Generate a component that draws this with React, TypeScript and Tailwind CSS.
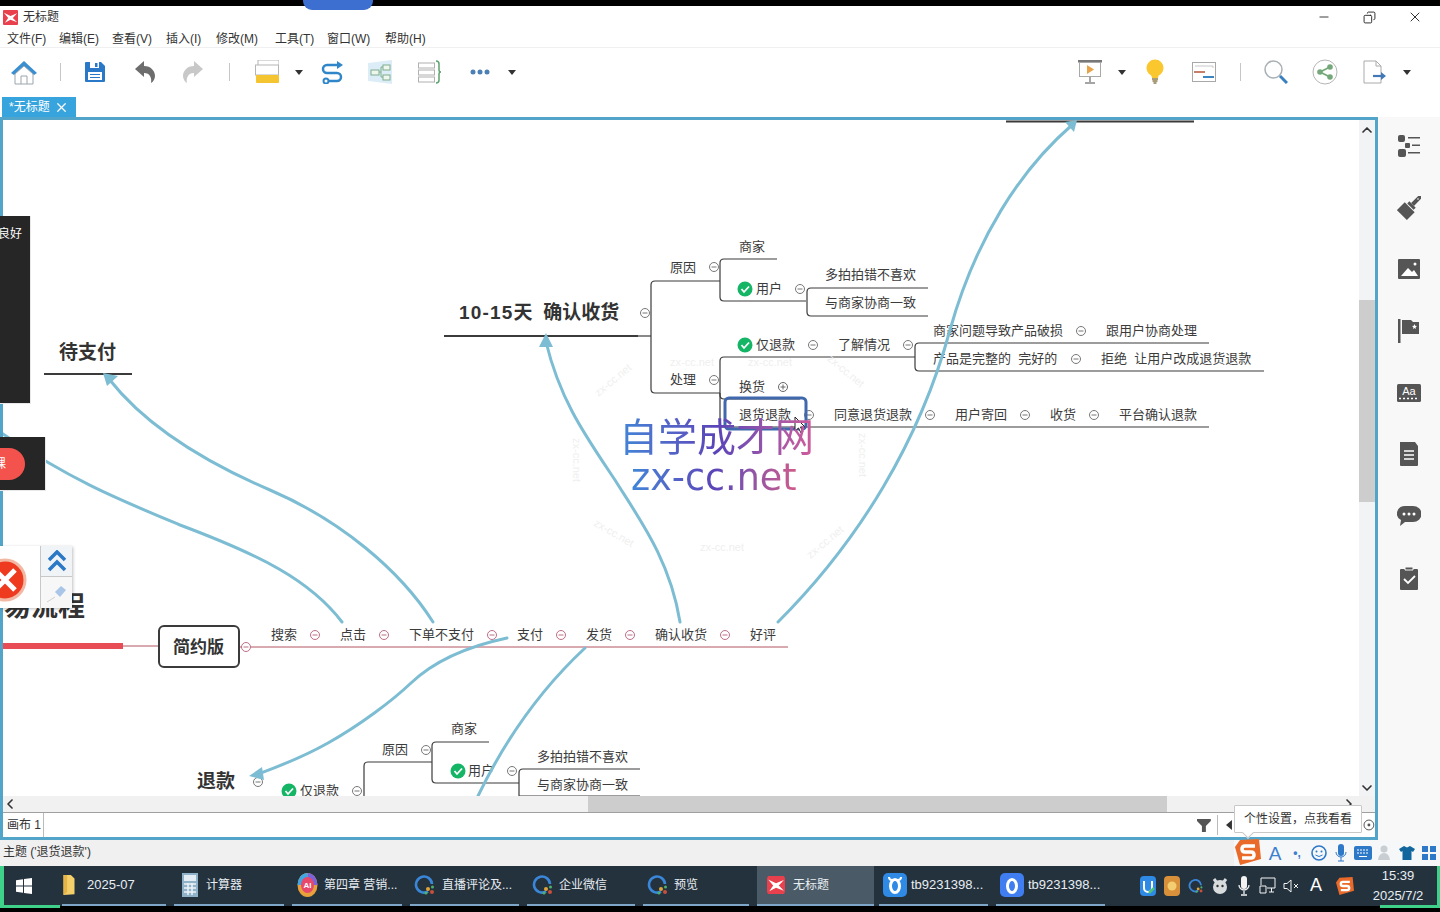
import type { ReactNode } from "react";
import { ChevronLeft, ChevronRight, ChevronUp, Minus, Copy, X } from "lucide-react";

// canvas labels, page coordinates (left edge, vertical centre)
const labels: [string, number, number][] = [
  ["商家", 739, 247],
  ["原因", 670, 268],
  ["多拍拍错不喜欢", 825, 275],
  ["用户", 756, 289],
  ["与商家协商一致", 825, 303],
  ["商家问题导致产品破损", 933, 331],
  ["跟用户协商处理", 1106, 331],
  ["仅退款", 756, 345],
  ["了解情况", 838, 345],
  ["产品是完整的  完好的", 933, 359],
  ["拒绝  让用户改成退货退款", 1101, 359],
  ["处理", 670, 380],
  ["换货", 739, 387],
  ["退货退款", 739, 415],
  ["同意退货退款", 834, 415],
  ["用户寄回", 955, 415],
  ["收货", 1050, 415],
  ["平台确认退款", 1119, 415],
  ["搜索", 271, 635],
  ["点击", 340, 635],
  ["下单不支付", 409, 635],
  ["支付", 517, 635],
  ["发货", 586, 635],
  ["确认收货", 655, 635],
  ["好评", 750, 635],
  ["商家", 451, 729],
  ["原因", 382, 750],
  ["多拍拍错不喜欢", 537, 757],
  ["用户", 468, 771],
  ["与商家协商一致", 537, 785],
  ["仅退款", 300, 791],
];

const grayDots: [number, number][] = [
  [714, 267], [800, 289], [645, 313], [813, 345], [908, 345], [1081, 331], [1076, 359],
  [714, 380], [809, 415], [930, 415], [1025, 415], [1094, 415], [426, 750], [512, 771],
  [258, 782], [357, 791],
];
const pinkDots: [number, number][] = [
  [246, 647], [315, 635], [384, 635], [492, 635], [561, 635], [630, 635], [725, 635],
];
const checks: [number, number][] = [[745, 289], [745, 345], [458, 771], [289, 791]];

// faint repeated watermark: x, y, rotation
const faint: [number, number, number][] = [
  [613, 380, -40], [692, 362, 0], [770, 362, 0], [846, 371, 40], [577, 460, 90],
  [863, 455, 90], [614, 533, 30], [722, 547, 0], [825, 542, -40],
];

const menus = [
  { t: "文件(F)", w: "w-[52px]" },
  { t: "编辑(E)", w: "w-[53px]" },
  { t: "查看(V)", w: "w-[54px]" },
  { t: "插入(I)", w: "w-[50px]" },
  { t: "修改(M)", w: "w-[59px]" },
  { t: "工具(T)", w: "w-[52px]" },
  { t: "窗口(W)", w: "w-[58px]" },
  { t: "帮助(H)", w: "w-[52px]" },
];

const tasks = [
  { name: "2025-07", w: "w-[104px] pl-0 gap-[11px] text-[13px]", icon: <FolderIcon /> },
  { name: "计算器", w: "w-[110px] pl-[7px] gap-[7px]", icon: <CalcIcon /> },
  { name: "第四章 营销...", w: "w-[110px] pl-[5px] gap-[6px]", icon: <AiIcon /> },
  { name: "直播评论及...", w: "w-[109px] pl-[4px] gap-[6px]", icon: <QIcon /> },
  { name: "企业微信", w: "w-[108px] pl-[5px] gap-[5px]", icon: <QIcon /> },
  { name: "预览", w: "w-[106px] pl-[4px] gap-[5px]", icon: <QIcon /> },
  { name: "无标题", w: "w-[117px] -mr-[3px] pl-[10px] gap-[8px] bg-[#4a5a66]", icon: <XmindIcon className="h-5 w-[18px] rounded-sm" /> },
  { name: "tb9231398...", w: "w-[109px] pl-[4px] gap-[4px] text-[13px]", icon: <TbIcon bg="#2f8ae6" horns /> },
  { name: "tb9231398...", w: "w-[109px] pl-[4px] gap-[4px] text-[13px]", icon: <TbIcon bg="#3f7df0" /> },
];

function XmindIcon({ className }: { className: string }) {
  return (
    <svg viewBox="0 0 16 16" className={className}>
      <rect width="16" height="16" rx="1" fill="#e8404c" />
      <path d="M1 3 L8 6.500 L15 3.500 L10.500 8.500 L15 13 L8 10.500 L2 13.500 L5.500 8.500 Z" fill="#fff" />
    </svg>
  );
}

function FolderIcon() {
  return (
    <svg viewBox="0 0 14 24" className="h-[22px] w-[14px] shrink-0">
      <path d="M1 1 H9 L13 5 V22 L1 23 Z" fill="#f5cf6a" />
      <path d="M1 1 H5 V20 L1 23 Z" fill="#e5b548" />
    </svg>
  );
}

function CalcIcon() {
  return (
    <svg viewBox="0 0 16 24" className="h-6 w-[18px] shrink-0">
      <rect width="16" height="24" fill="#8fb2c8" />
      <rect x="2" y="2" width="12" height="6" fill="#e3edf3" />
      <path d="M2 11 H14 M2 15 H14 M2 19 H14 M6 10 V22 M10 10 V22" stroke="#eef4f8" strokeWidth="1.500" />
    </svg>
  );
}

function AiIcon() {
  return (
    <svg viewBox="0 0 20 24" className="h-6 w-[21px] shrink-0">
      <ellipse cx="10" cy="12" rx="10" ry="12" fill="#e9a23b" />
      <path d="M10 0 A10 12 0 0 1 20 12 L10 12 Z" fill="#7a62d8" />
      <path d="M0 12 A10 12 0 0 1 10 0 L10 12 Z" fill="#3ea7e6" />
      <ellipse cx="10" cy="12" rx="6.500" ry="8" fill="#e8486a" />
      <text x="10" y="15" textAnchor="middle" fontSize="8" fontWeight="700" fill="#fff">AI</text>
    </svg>
  );
}

function QIcon() {
  return (
    <svg viewBox="0 0 22 22" className="h-[22px] w-[22px] shrink-0">
      <path d="M14 17.500 A8 8 0 1 1 18 10" fill="none" stroke="#3a86d8" strokeWidth="2.600" />
      <circle cx="14" cy="15" r="2" fill="#e0a43a" />
      <circle cx="18" cy="18" r="2" fill="#c9503c" />
      <circle cx="18.500" cy="13" r="1.500" fill="#4cb26a" />
      <circle cx="12" cy="19" r="1.500" fill="#4cb26a" />
    </svg>
  );
}

function TbIcon({ bg, horns }: { bg: string; horns?: boolean }) {
  return (
    <svg viewBox="0 0 24 24" className="h-6 w-6 shrink-0">
      <rect width="24" height="24" rx="5" fill={bg} />
      {horns ? <path d="M6 4 Q6 7 9 7 H15 Q18 7 18 4" fill="none" stroke="#fff" strokeWidth="2" /> : null}
      <ellipse cx="12" cy="13" rx="4.500" ry="6.500" fill="none" stroke="#fff" strokeWidth="3" />
    </svg>
  );
}

function Caret() {
  return (
    <svg viewBox="0 0 8 5" className="h-[5px] w-2">
      <path d="M0 0 H8 L4 5 Z" fill="#333" />
    </svg>
  );
}

function Sep({ className }: { className: string }) {
  return <div className={`h-[18px] w-px bg-[#c6c6c6] ${className}`} />;
}

function LeftTools() {
  return (
    <div className="flex items-center pl-[10px]">
      <svg viewBox="0 0 28 26" className="h-[26px] w-7">
        <path d="M14 2 L1 14 L4 16 L14 7 L24 16 L27 14 Z" fill="#3a8fd0" />
        <path d="M5 15 V25 H23 V15 L14 7 Z" fill="#fff" stroke="#9aa5ad" />
        <path d="M11 25 V17 H17 V25" fill="none" stroke="#9aa5ad" />
      </svg>
      <Sep className="ml-[22px]" />
      <svg viewBox="0 0 20 20" className="ml-[24px] h-5 w-5">
        <path d="M0 1 Q0 0 1 0 H16 L20 4 V19 Q20 20 19 20 H1 Q0 20 0 19 Z" fill="#2a79c8" />
        <rect x="5" y="0" width="9" height="6" fill="#fff" />
        <rect x="10" y="1" width="2.500" height="4" fill="#2a79c8" />
        <rect x="3" y="10" width="14" height="8" fill="#fff" />
        <path d="M5 12.500 H15 M5 15.500 H15" stroke="#2a79c8" />
      </svg>
      <svg viewBox="0 0 20 22" className="ml-[30px] h-[22px] w-5">
        <path d="M0 8 L9 0 V5 C16 5 20 10 20 15 C20 18 18 21 16 22 C17 17 15 12 9 12 V16 Z" fill="#6d6d6d" />
      </svg>
      <svg viewBox="0 0 20 22" className="ml-[28px] h-[22px] w-5">
        <path d="M20 8 L11 0 V5 C4 5 0 10 0 15 C0 18 2 21 4 22 C3 17 5 12 11 12 V16 Z" fill="#c8c8c8" />
      </svg>
      <Sep className="ml-[26px]" />
      <svg viewBox="0 0 24 24" className="ml-[25px] h-6 w-6">
        <rect x="3" y="0" width="21" height="9" fill="#fff" stroke="#b5b5b5" />
        <rect x="0.500" y="5" width="23" height="10" fill="#fff" stroke="#b5b5b5" />
        <rect x="1" y="15" width="23" height="8" rx="1" fill="#f5c431" />
      </svg>
      <div className="ml-[16px]"><Caret /></div>
      <svg viewBox="0 0 24 24" className="ml-[17px] h-6 w-6">
        <path d="M18 5 H7 A4 4 0 0 0 7 13 H17 A4 4 0 0 1 17 21 H8" fill="none" stroke="#2f86c8" strokeWidth="2.500" />
        <path d="M17 1 L23 5 L17 9 Z" fill="#2f86c8" />
        <circle cx="6" cy="21" r="2.500" fill="#fff" stroke="#2f86c8" strokeWidth="2" />
      </svg>
      <svg viewBox="0 0 26 24" className="ml-[23px] h-6 w-[26px]">
        <path d="M1 3 L25 0 V24 L1 21 Z" fill="#dcedf7" />
        <g fill="#eef6ee" stroke="#7fae90">
          <rect x="4" y="10" width="8" height="5" />
          <rect x="16" y="5" width="7" height="5" />
          <rect x="16" y="15" width="7" height="5" />
        </g>
        <path d="M12 12 H14 M14 7 V17 M14 7 H16 M14 17 H16" stroke="#7fae90" fill="none" />
      </svg>
      <svg viewBox="0 0 24 24" className="ml-[25px] h-6 w-6">
        <g fill="#fff" stroke="#b0b0b0">
          <rect x="0.500" y="3" width="16" height="5" />
          <rect x="0.500" y="10" width="16" height="5" />
          <rect x="0.500" y="17" width="16" height="5" />
        </g>
        <path d="M18 1 Q21 1 21 4 V10 Q21 12 23 12 Q21 12 21 14 V20 Q21 23 18 23" fill="none" stroke="#5fa36f" strokeWidth="1.500" />
      </svg>
      <svg viewBox="0 0 20 6" className="ml-[28px] h-[6px] w-5">
        <circle cx="3" cy="3" r="2.500" fill="#4b7fb5" />
        <circle cx="10" cy="3" r="2.500" fill="#4b7fb5" />
        <circle cx="17" cy="3" r="2.500" fill="#4b7fb5" />
      </svg>
      <div className="ml-[18px]"><Caret /></div>
    </div>
  );
}

function RightTools() {
  return (
    <div className="flex items-center pr-[29px]">
      <svg viewBox="0 0 24 24" className="h-6 w-6">
        <rect x="0" y="0" width="24" height="2.500" fill="#777" />
        <rect x="1.500" y="2.500" width="21" height="14" fill="#fff" stroke="#a8a8a8" />
        <path d="M9 5 L16 9.500 L9 14 Z" fill="#e8a24a" />
        <path d="M12 17 V22 M7 23 H17" stroke="#888" strokeWidth="1.500" />
      </svg>
      <div className="ml-[16px]"><Caret /></div>
      <svg viewBox="0 0 18 26" className="ml-[20px] h-[26px] w-[18px]">
        <circle cx="9" cy="9" r="8.500" fill="#fbc72e" />
        <path d="M5 15 H13 L12 19 H6 Z" fill="#fbc72e" />
        <path d="M6 20 H12 M6.500 22 H11.500 M7.500 24 H10.500" stroke="#8f7c4c" strokeWidth="1.500" />
      </svg>
      <svg viewBox="0 0 24 20" className="ml-[28px] h-5 w-6">
        <rect x="0.500" y="0.500" width="23" height="19" fill="#fff" stroke="#a8a8a8" />
        <path d="M2 10 H13" stroke="#c77f6a" strokeWidth="2" />
        <path d="M11 15 H22" stroke="#3a86c0" strokeWidth="2" />
        <path d="M3 4 H21 V6" fill="none" stroke="#c8c8c8" />
      </svg>
      <Sep className="ml-[24px]" />
      <svg viewBox="0 0 24 24" className="ml-[23px] h-6 w-6">
        <circle cx="9.500" cy="9.500" r="8.500" fill="#fff" stroke="#a9b0b5" strokeWidth="1.500" />
        <path d="M16 16 L23 23" stroke="#3a7fc0" strokeWidth="3" />
      </svg>
      <svg viewBox="0 0 26 26" className="ml-[24px] h-[26px] w-[26px]">
        <circle cx="13" cy="13" r="12" fill="#fff" stroke="#b5b5b5" />
        <path d="M18 8 L8 13 L18 18" fill="none" stroke="#74a878" strokeWidth="1.800" />
        <circle cx="18" cy="8" r="2.800" fill="#74a878" />
        <circle cx="8" cy="13" r="2.800" fill="#74a878" />
        <circle cx="18" cy="18" r="2.800" fill="#74a878" />
      </svg>
      <svg viewBox="0 0 24 24" className="ml-[25px] h-6 w-6">
        <path d="M1 1 H13 L18 6 V23 H1 Z M13 1 V6 H18" fill="#fff" stroke="#aaa" />
        <path d="M10 16 H19" stroke="#4278b8" strokeWidth="2.200" />
        <path d="M18 12 L23 16 L18 20 Z" fill="#4278b8" />
      </svg>
      <div className="ml-[16px]"><Caret /></div>
    </div>
  );
}

function SideIcons() {
  const box = "h-6 w-6";
  return (
    <div className="flex w-[62px] flex-col items-center gap-[37.700px] bg-[#f8f8f8] pt-[17px]">
      <svg viewBox="0 0 24 24" className={box}>
        <g fill="#555">
          <rect x="1" y="1" width="7" height="7" rx="2" />
          <rect x="8" y="9" width="5" height="5" rx="1" />
          <rect x="1" y="15" width="8" height="8" rx="2" />
          <rect x="11" y="3" width="12" height="1.500" />
          <rect x="15" y="10.500" width="8" height="1.500" />
          <rect x="11" y="18" width="12" height="1.500" />
        </g>
      </svg>
      <svg viewBox="0 0 24 24" className={box}>
        <g fill="#555" transform="rotate(45 12 12)">
          <path d="M10 -3 A2 2 0 0 1 14 -3 V7 H10 Z" />
          <rect x="7.500" y="7" width="9" height="3" />
          <path d="M5 11 H19 V22 H5 Z" />
        </g>
        <circle cx="21" cy="3" r="0.800" fill="#f8f8f8" />
      </svg>
      <svg viewBox="0 0 24 24" className={box}>
        <rect x="1" y="2" width="22" height="20" rx="1" fill="#555" />
        <path d="M4 19 L11 11 L15 15 L17 13 L21 19 Z" fill="#fff" />
        <circle cx="18" cy="7" r="1.500" fill="#fff" />
      </svg>
      <svg viewBox="0 0 24 24" className={box}>
        <rect x="1" y="0" width="2.500" height="24" fill="#555" />
        <path d="M5 1 H14 L16 3 H22 V15 H5 Z" fill="#555" />
        <path d="M17.500 5 L18.200 6.800 L20 7 L18.600 8.200 L19 10 L17.500 9 L16 10 L16.400 8.200 L15 7 L16.800 6.800 Z" fill="#fff" />
      </svg>
      <svg viewBox="0 0 24 18" className={box}>
        <rect width="24" height="18" rx="1.500" fill="#555" />
        <text x="12" y="10.500" textAnchor="middle" fontSize="11" fill="#fff" fontFamily="Liberation Sans">Aa</text>
        <path d="M2 14.500 H22" stroke="#fff" strokeWidth="1.500" strokeDasharray="2 2" />
      </svg>
      <svg viewBox="0 0 24 24" className={box}>
        <path d="M3 0 H18 L21 4 V23 Q21 24 20 24 H4 Q3 24 3 23 Z" fill="#555" />
        <path d="M7 9 H17 M7 13 H17 M7 17 H17" stroke="#fff" strokeWidth="1.300" />
      </svg>
      <svg viewBox="0 0 24 24" className={box}>
        <path d="M8 2 H16 A8 7.500 0 0 1 16 18 H8 L3 22 L4 16 A8 7.500 0 0 1 8 2 Z" fill="#555" />
        <circle cx="7" cy="10" r="1.500" fill="#fff" />
        <circle cx="12" cy="10" r="1.500" fill="#fff" />
        <circle cx="17" cy="10" r="1.500" fill="#fff" />
      </svg>
      <svg viewBox="0 0 24 24" className={box}>
        <path d="M4 3 H8 V1 H16 V3 H20 Q21 3 21 4 V23 Q21 24 20 24 H4 Q3 24 3 23 V4 Q3 3 4 3 Z" fill="#555" />
        <path d="M8 1 H16 V4 H8 Z" fill="none" stroke="#f8f8f8" />
        <path d="M7 13 L11 17 L18 10" fill="none" stroke="#fff" strokeWidth="1.800" />
      </svg>
    </div>
  );
}

function MapLines() {
  const ln = "#3b3b3b";
  return (
    <svg viewBox="3 120 1356 676" className="absolute inset-0 h-full w-full">
      <g fill="none" stroke={ln} strokeWidth="1.200">
        <path d="M444 336 H638" strokeWidth="2" />
        <path d="M638 336 H651" />
        <path d="M720 281 H655 Q651 281 651 285 V389 Q651 393 655 393 H720" />
        <path d="M777 259 H724 Q720 259 720 263 V297 Q720 301 724 301 H806" />
        <path d="M928 288 H811 Q807 288 807 292 V312 Q807 316 811 316 H928" />
        <path d="M915 357 H724 Q720 357 720 361 V395 Q720 399 724 399 H800" />
        <path d="M720 393 V427 H1209" />
        <path d="M1209 343 H919 Q915 343 915 347 V367 Q915 371 919 371 H1264" />
        <path d="M44 374 H132 M1006 121.500 H1194" strokeWidth="2" />
        <path d="M432 762 H368 Q364 762 364 766 V800" />
        <path d="M489 742 H436 Q432 742 432 746 V779 Q432 783 436 783 H519" />
        <path d="M640 769 H523 Q519 769 519 773 V800 M519 796 H640" />
      </g>
      <path d="M3 646 H123" stroke="#e84d55" strokeWidth="6" />
      <path d="M123 646 H159 M240 647 H788" stroke="#b2545f" strokeWidth="1" fill="none" />
      <rect x="159" y="626" width="80" height="41" rx="5" fill="#fff" stroke="#3b3b3b" strokeWidth="2" />
      {grayDots.map(([x, y]) => (
        <g key={`${x}-${y}`}>
          <circle cx={x} cy={y} r="4.500" fill="#fff" stroke="#777" />
          <path d={`M${x - 2.500} ${y} H${x + 2.500}`} stroke="#777" />
        </g>
      ))}
      {pinkDots.map(([x, y]) => (
        <g key={`${x}-${y}`}>
          <circle cx={x} cy={y} r="4.500" fill="#fff" stroke="#bd6e85" />
          <path d={`M${x - 2.500} ${y} H${x + 2.500}`} stroke="#bd6e85" />
        </g>
      ))}
      <circle cx="783" cy="387" r="4.500" fill="#fff" stroke="#666" />
      <path d="M780.500 387 H785.500 M783 384.500 V389.500" stroke="#666" />
      {checks.map(([x, y]) => (
        <g key={`${x}-${y}`}>
          <circle cx={x} cy={y} r="7.500" fill="#14b565" />
          <path d={`M${x - 3.500} ${y} L${x - 1} ${y + 3} L${x + 4} ${y - 2.500}`} fill="none" stroke="#fff" strokeWidth="1.800" />
        </g>
      ))}
    </svg>
  );
}

function Curves() {
  const c = "#7dbdd3";
  return (
    <svg viewBox="3 120 1356 676" className="absolute inset-0 h-full w-full">
      <g fill="none" stroke={c} strokeWidth="3" strokeLinecap="round">
        <path d="M778 622 C860 540 920 440 950 330 C975 240 1020 170 1072 125" />
        <path d="M680 622 C670 560 640 520 615 480 C585 435 560 400 546 342" />
        <path d="M433 622 C400 570 340 520 270 490 C200 460 145 425 109 379" />
        <path d="M342 622 C310 580 260 555 180 525 C120 500 70 480 0 432" />
        <path d="M507 638 C460 648 430 665 411 683 S360 725 328 743 S280 765 256 775" />
        <path d="M585 648 C540 690 505 740 478 796" />
      </g>
      <g fill={c}>
        <path d="M1077 120 L1065 122 L1074 132 Z" />
        <path d="M546 333 L539 347 L553 347 Z" />
        <path d="M103 373 L118 376 L107 386 Z" />
        <path d="M249 776 L262 767 L264 780 Z" />
      </g>
      {/* selected topic */}
      <rect x="725" y="398" width="81" height="31" rx="4" fill="none" stroke="#3f68ad" strokeWidth="3" />
      <path d="M795 417 V431 L798.500 428 L801 433 L803 432 L800.500 427 L805 427 Z" fill="#fff" stroke="#222" />
    </svg>
  );
}

function Canvas() {
  return (
    <div className="relative min-w-0 flex-1 overflow-hidden bg-white">
      <MapLines />
      {labels.map(([text, x, y]) => (
        <span
          key={`${text}-${x}-${y}`}
          className="absolute -translate-y-1/2 whitespace-pre text-[13px] leading-none text-[#3c3c3c]"
          style={{ left: x - 3, top: y - 121 }}
        >
          {text}
        </span>
      ))}
      <span className="absolute left-[456px] top-[181px] whitespace-pre text-[19px] font-bold leading-6 text-[#333]">
        <span className="tracking-[1.200px]">10-15</span>天  确认收货
      </span>
      <span className="absolute left-[56px] top-[220px] text-[19px] font-bold leading-[26px] text-[#333]">待支付</span>
      <span className="absolute left-[170px] top-[516px] text-[17px] font-bold leading-6 text-[#333]">简约版</span>
      <span className="absolute left-[194px] top-[649px] text-[19px] font-bold leading-[26px] text-[#333]">退款</span>
      <span className="absolute left-[-26px] top-[469px] text-[27px] font-bold leading-9 text-[#333]">交易流程</span>
      <Curves />
      {faint.map(([x, y, r]) => (
        <span
          key={`${x}-${y}`}
          className="absolute -translate-x-1/2 -translate-y-1/2 text-[11px] text-[#efefef]"
          style={{ left: x - 3, top: y - 120, rotate: `${r}deg` }}
        >
          zx-cc.net
        </span>
      ))}
      <span className="absolute left-[616px] top-[295px] bg-gradient-to-r from-[#3f86d8] via-[#5a44b8] to-[#d05a9a] bg-clip-text text-[39px] leading-[46px] text-transparent">
        自学成才网
      </span>
      <span className="absolute left-[628px] top-[336px] bg-gradient-to-r from-[#3f86d8] via-[#5a44b8] to-[#d05a8a] bg-clip-text font-['DejaVu_Sans'] text-[36.500px] leading-[44px] text-transparent">
        zx-cc.net
      </span>
    </div>
  );
}

function Tray({ children }: { children: ReactNode }) {
  return <div className="flex h-6 w-6 items-center justify-center">{children}</div>;
}

function Taskbar() {
  return (
    <div className="relative flex h-[40px] shrink-0 items-stretch bg-[#24323e] text-[12px] text-[#e8eef2]">
      <div className="flex w-[62px] items-center justify-center">
        <svg viewBox="0 0 16 16" className="mr-[14px] h-4 w-4">
          <path d="M0 2.300 L7 1.300 V7.500 H0 Z M8 1.100 L16 0 V7.500 H8 Z M0 8.500 H7 V14.700 L0 13.700 Z M8 8.500 H16 V16 L8 14.900 Z" fill="#fff" />
        </svg>
      </div>
      <div className="flex gap-2">
        {tasks.map((t, i) => (
          <div key={i} className={`flex items-center border-b-2 border-[#7ea6c8] ${t.w}`}>
            {t.icon}
            <span className="whitespace-nowrap">{t.name}</span>
          </div>
        ))}
      </div>
      <div className="ml-[31px] flex items-center pb-[1px]">
        <Tray><TbIconSmall /></Tray>
        <Tray>
          <svg viewBox="0 0 16 20" className="h-5 w-4">
            <rect width="16" height="20" rx="4" fill="#d8913a" />
            <circle cx="8" cy="10" r="4.500" fill="#f3cd70" />
          </svg>
        </Tray>
        <Tray><div className="origin-center scale-[0.72]"><QIcon /></div></Tray>
        <Tray>
          <svg viewBox="0 0 18 18" className="h-[18px] w-[18px]">
            <circle cx="9" cy="10" r="7" fill="#d9dcdd" />
            <path d="M3 2 L6 6 M15 2 L12 6" stroke="#d9dcdd" strokeWidth="3" />
            <circle cx="6.500" cy="9" r="1.200" fill="#333" />
            <circle cx="11.500" cy="9" r="1.200" fill="#333" />
          </svg>
        </Tray>
        <Tray>
          <svg viewBox="0 0 14 20" className="h-5 w-[14px]">
            <rect x="4" y="0" width="6" height="13" rx="3" fill="#f2f2f2" />
            <path d="M2 9 A5 5 0 0 0 12 9 M7 15 V18 M4 19 H10" fill="none" stroke="#f2f2f2" strokeWidth="1.300" />
          </svg>
        </Tray>
        <Tray>
          <svg viewBox="0 0 18 18" className="h-[18px] w-[18px]">
            <path d="M2 1 H16 V11 H8 M2 1 V8 M1 9 H7 V16 H1 Z M10 15 H15 M12.500 11 V15" fill="none" stroke="#f2f2f2" />
          </svg>
        </Tray>
        <Tray>
          <svg viewBox="0 0 18 16" className="h-4 w-[18px]">
            <path d="M1 5.500 H4 L8 2 V14 L4 10.500 H1 Z" fill="none" stroke="#f2f2f2" />
            <path d="M11 6 L15 10 M15 6 L11 10" stroke="#f2f2f2" />
          </svg>
        </Tray>
        <Tray><span className="font-['Liberation_Sans'] text-[18px] text-white">A</span></Tray>
        <div className="ml-[5px] flex h-6 w-6 items-center justify-center"><SogouMark small /></div>
      </div>
      <div className="ml-[11px] flex w-[60px] flex-col items-center justify-center pb-[1px] text-[13px] leading-[20px]">
        <span>15:39</span>
        <span>2025/7/2</span>
      </div>
    </div>
  );
}

function TbIconSmall() {
  return (
    <svg viewBox="0 0 16 20" className="h-5 w-4">
      <rect width="16" height="20" rx="4" fill="#2f8ae6" />
      <path d="M4 5 V12 A4 4 0 0 0 12 12 V5" fill="none" stroke="#fff" strokeWidth="2" />
      <path d="M9 17 L14 12" stroke="#4cc27a" strokeWidth="2.500" />
    </svg>
  );
}

function SogouMark({ small }: { small?: boolean }) {
  return (
    <svg viewBox="0 0 26 26" className={small ? "h-[22px] w-[18px]" : "h-[26px] w-[26px]"}>
      <path d="M5 1 L24 0 L26 20 L5 26 L0 8 Z" fill="#ea6a2a" />
      <path d="M20 7 H10 Q7 7 7 10 Q7 13 10 13 H16 Q19 13 19 16 Q19 19 16 19 H7" fill="none" stroke="#fff" strokeWidth="3.500" />
    </svg>
  );
}

function Overlays() {
  return (
    <>
      {/* top recording pill */}
      <div className="absolute left-[303px] top-0 h-[10px] w-[70px] rounded-b-[9px] bg-[#3d6fd0]" />

      {/* left side panels */}
      <div className="absolute left-0 top-[216px] flex h-[188px] w-[31px] justify-end border-r border-b border-[#e8e8e8] bg-[#262626] pt-[10px] pr-[8px]">
        <span className="whitespace-nowrap text-[12px] leading-4 text-white">良好</span>
      </div>
      <div className="absolute left-0 top-[437px] flex h-[54px] w-[46px] items-center border-r border-b border-[#e8e8e8] bg-[#262626]">
        <div className="flex h-8 w-[25px] items-center overflow-hidden rounded-r-full bg-[#f4524c] text-[12px] text-white">
          <span className="-ml-[6px]">课</span>
        </div>
      </div>

      {/* little popup with the red cross */}
      <div className="absolute left-0 top-[546px] flex h-[62px] w-[72px] bg-[#f7f7f7] shadow-[1px_1px_3px_rgba(0,0,0,0.25)]">
        <div className="relative w-[40px] overflow-hidden bg-white">
          <svg viewBox="0 0 44 44" className="absolute left-[-17px] top-[12px] h-11 w-11">
            <circle cx="22" cy="22" r="20" fill="#ee3a1f" stroke="#f3b8a4" strokeWidth="3" />
            <path d="M12 12 L32 32 M32 12 L12 32" stroke="#fff" strokeWidth="5" />
          </svg>
        </div>
        <div className="flex w-[32px] flex-col border-l border-[#c8c8c8]">
          <div className="flex h-[31px] items-center justify-center border-b border-[#c8c8c8] bg-[#f1f4f7]">
            <svg viewBox="0 0 20 22" className="h-[22px] w-5">
              <path d="M2 10 L10 2 L18 10 M2 20 L10 12 L18 20" fill="none" stroke="#2a78c6" strokeWidth="3.500" />
            </svg>
          </div>
          <div className="flex flex-1 items-center justify-center">
            <svg viewBox="0 0 20 20" className="h-5 w-5">
              <path d="M0 19 L8 14" stroke="#d0d0d0" />
              <path d="M8 9 L14 3 L19 7 L13 14 Z" fill="#a9c6e8" />
            </svg>
          </div>
        </div>
      </div>

      {/* input method tooltip */}
      <div className="absolute left-[1234px] top-[805px] flex h-[28px] w-[128px] items-center justify-center rounded-[1px] border border-[#c8c8c8] bg-white text-[12px] text-[#333]">
        {"个性设置\uFF0C点我看看"}
        <div className="absolute -bottom-[5px] left-[9px] h-2 w-2 rotate-45 border-r border-b border-[#c8c8c8] bg-white" />
      </div>

      {/* input method bar */}
      <div className="absolute left-[1234px] top-[840px] flex h-[26px] w-[206px] items-center bg-[#f5f7f9]">
        <div className="ml-[1px] mt-[-2px] flex h-[26px] w-[26px] items-center justify-center"><SogouMark /></div>
        <div className="ml-[3px] flex items-center text-[#3f7fd0]">
          <span className="flex w-[22px] justify-center font-['Liberation_Sans'] text-[19px] leading-none">A</span>
          <span className="flex w-[22px] justify-center text-[12px] font-bold leading-none">•,</span>
          <svg viewBox="0 0 16 16" className="mx-[3px] h-4 w-4">
            <circle cx="8" cy="8" r="7" fill="none" stroke="#2e78c8" strokeWidth="1.600" />
            <circle cx="5.500" cy="6.500" r="1" fill="#2e78c8" />
            <circle cx="10.500" cy="6.500" r="1" fill="#2e78c8" />
            <path d="M4.500 10 Q8 13 11.500 10" fill="none" stroke="#2e78c8" />
          </svg>
          <svg viewBox="0 0 12 18" className="mx-[5px] h-[18px] w-3">
            <rect x="3" y="0" width="6" height="12" rx="3" fill="#2e78c8" />
            <path d="M1 8 A5 5 0 0 0 11 8 M6 13 V17 M3 17 H9" fill="none" stroke="#2e78c8" />
          </svg>
          <svg viewBox="0 0 18 14" className="mx-[2px] h-[14px] w-[18px]">
            <rect width="18" height="14" rx="2" fill="#2e78c8" />
            <path d="M3 4 H15 M3 7 H15" stroke="#fff" strokeDasharray="2 1" />
            <path d="M5 10.500 H13" stroke="#fff" />
          </svg>
          <svg viewBox="0 0 14 16" className="mx-[4px] h-4 w-[14px]">
            <circle cx="6" cy="4" r="3.500" fill="#c9ced3" />
            <path d="M0 15 Q1 8 6 8 Q11 8 12 15 Z" fill="#c9ced3" />
          </svg>
          <svg viewBox="0 0 16 16" className="mx-[3px] h-4 w-4">
            <path d="M5 1 L8 2.500 L11 1 L16 4 L14 7 L12.500 6 V15 H3.500 V6 L2 7 L0 4 Z" fill="#12669e" />
          </svg>
          <svg viewBox="0 0 14 14" className="mx-[4px] h-[14px] w-[14px]">
            <rect width="6" height="6" fill="#2e78c8" />
            <rect x="8" width="6" height="6" fill="#2e78c8" />
            <rect y="8" width="6" height="6" fill="#2e78c8" />
            <rect x="8" y="8" width="6" height="6" fill="#2e78c8" />
          </svg>
        </div>
      </div>

      {/* green recording edge */}
      <div className="absolute bottom-[6px] left-0 top-[866px] w-1 bg-[#3fd08a]" />
      <div className="absolute bottom-[4px] left-0 h-[3px] w-[60px] bg-[#3fd08a]" />
      <div className="absolute right-0 top-[866px] h-[40px] w-[3px] bg-[#3fd08a]" />
      <div className="absolute bottom-[4px] right-0 h-[3px] w-[60px] bg-[#3fd08a]" />
    </>
  );
}

export default function App() {
  return (
    <div className="relative flex h-[912px] w-[1440px] flex-col overflow-hidden bg-white font-['Liberation_Sans','Noto_Sans_CJK_SC',sans-serif] text-[#333]">
      <div className="h-[6px] shrink-0 bg-black" />

      {/* title bar */}
      <div className="flex h-[22px] shrink-0 items-center justify-between">
        <div className="flex items-center pl-[3px]">
          <XmindIcon className="h-[15px] w-[15px]" />
          <span className="ml-[5px] text-[12px]">无标题</span>
        </div>
        <div className="flex items-center gap-[31.500px] pr-[17px] text-[#222]">
          <Minus className="h-[14px] w-[14px]" strokeWidth={1.500} />
          <Copy className="h-[13px] w-[13px] -scale-x-100" strokeWidth={1.700} />
          <X className="h-4 w-4" strokeWidth={1.400} />
        </div>
      </div>

      {/* menu */}
      <div className="flex h-[20px] shrink-0 items-center border-b border-[#f0f0f0] pl-[7px] pt-[2px] text-[12px]">
        {menus.map((m) => (
          <span key={m.t} className={m.w}>{m.t}</span>
        ))}
      </div>

      {/* toolbar */}
      <div className="flex h-[48px] shrink-0 items-center justify-between">
        <LeftTools />
        <RightTools />
      </div>

      {/* tabs */}
      <div className="flex h-[21px] shrink-0 items-end pl-[2px]">
        <div className="flex h-[20px] w-[74px] items-center justify-between bg-[#37a4dd] pl-[7px] pr-[7px] text-[12px] text-white">
          <span>*无标题</span>
          <X className="h-[15px] w-[15px]" strokeWidth={2} />
        </div>
      </div>

      <div className="flex h-[723px] shrink-0">
        <div className="flex w-[1378px] flex-col border-[3px] border-[#52a4c9]">
          <div className="flex min-h-0 flex-1">
            <Canvas />
            <div className="relative w-[16px] bg-[#f1f3f5]">
              <ChevronUp className="mx-auto mt-[2px] h-4 w-4 text-[#333]" strokeWidth={2.500} />
              <div className="absolute left-0 right-0 top-[180px] h-[202px] bg-[#cdcdcd]" />
              <ChevronUp className="absolute bottom-0 left-0 h-4 w-4 rotate-180 text-[#333]" strokeWidth={2.500} />
            </div>
          </div>
          <div className="flex h-[16px] shrink-0 items-center bg-[#f1f1f1]">
            <ChevronLeft className="ml-[-1px] h-4 w-4 text-[#333]" strokeWidth={2.500} />
            <div className="ml-[570px] h-full w-[579px] bg-[#cdcdcd]" />
            <ChevronRight className="ml-[174px] h-4 w-4 text-[#333]" strokeWidth={2.500} />
          </div>
          <div className="flex h-[25px] shrink-0 items-center border-t border-[#a0a0a0] bg-white">
            <span className="w-[42px] border-r border-[#bbb] pl-1 text-[12px] leading-[24px]">画布 1</span>
            <svg viewBox="0 0 14 14" className="ml-[1153px] h-[14px] w-[14px]">
              <path d="M0 1 H14 V3 L9 8 V14 H5 V8 L0 3 Z" fill="#555" />
            </svg>
            <div className="ml-[6px] h-5 w-px bg-[#bbb]" />
            <svg viewBox="0 0 6 10" className="ml-[8px] h-[10px] w-[6px]">
              <path d="M6 0 V10 L0 5 Z" fill="#333" />
            </svg>
            <svg viewBox="0 0 12 12" className="ml-[131px] h-3 w-3">
              <circle cx="6" cy="6" r="5" fill="none" stroke="#555" />
              <circle cx="6" cy="6" r="1.500" fill="#555" />
            </svg>
          </div>
        </div>
        <SideIcons />
      </div>

      {/* status bar */}
      <div className="flex h-[26px] shrink-0 items-center bg-[#f0f0f0] pb-[3px] pl-[3px] text-[12px]">主题 ('退货退款')</div>

      <Taskbar />
      <div className="min-h-0 flex-1 bg-black" />

      <Overlays />
    </div>
  );
}
